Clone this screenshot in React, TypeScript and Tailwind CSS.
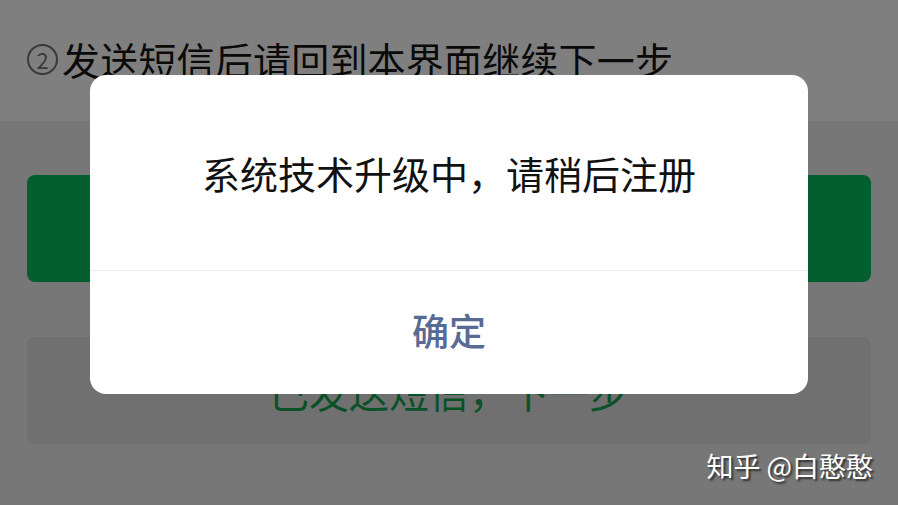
export default function App() {
  const font = { fontFamily: '"Noto Sans CJK SC", "Noto Sans", sans-serif' };
  return (
    <div className="relative w-[898px] h-[505px] overflow-hidden bg-[#777777]" style={font}>
      <div className="h-[121px] bg-[#7f7f7f] px-[27px] pt-[34px]">
        <div className="flex items-center text-[38px] leading-[50px] text-[#0a0a0a]">
          <span className="mr-[4px] flex h-[31px] w-[31px] items-center justify-center rounded-full border-[2px] border-[#3a3a3a] text-[22px] leading-none text-[#3a3a3a]">2</span>
          <span className="tracking-[0.2px]">发送短信后请回到本界面继续下一步</span>
        </div>
      </div>
      <div className="px-[27px] pt-[54px] flex flex-col gap-[55px]">
        <div className="h-[107px] rounded-[8px] bg-[#035f30]" />
        <div className="h-[107px] rounded-[8px] bg-[#707070] flex items-center justify-center text-[40px] text-[#0a5128]">
          已发送短信，下一步
        </div>
      </div>
      <div className="absolute right-[25px] top-[446px] text-[27px] leading-[40px] text-white [text-shadow:2px_2px_2px_rgba(0,0,0,0.6)]">
        知乎 @白憨憨
      </div>
      <div className="absolute left-[90px] top-[75px] w-[718px] h-[319px] rounded-[16px] bg-white flex flex-col">
        <div className="h-[195px] flex items-center justify-center text-[38px] text-[#111111]">
          系统技术升级中，请稍后注册
        </div>
        <div className="h-px bg-[#ececec]" />
        <div className="flex-1 flex items-center justify-center text-[37px] font-medium text-[#576b95] pb-[3px]">
          确定
        </div>
      </div>
    </div>
  );
}
